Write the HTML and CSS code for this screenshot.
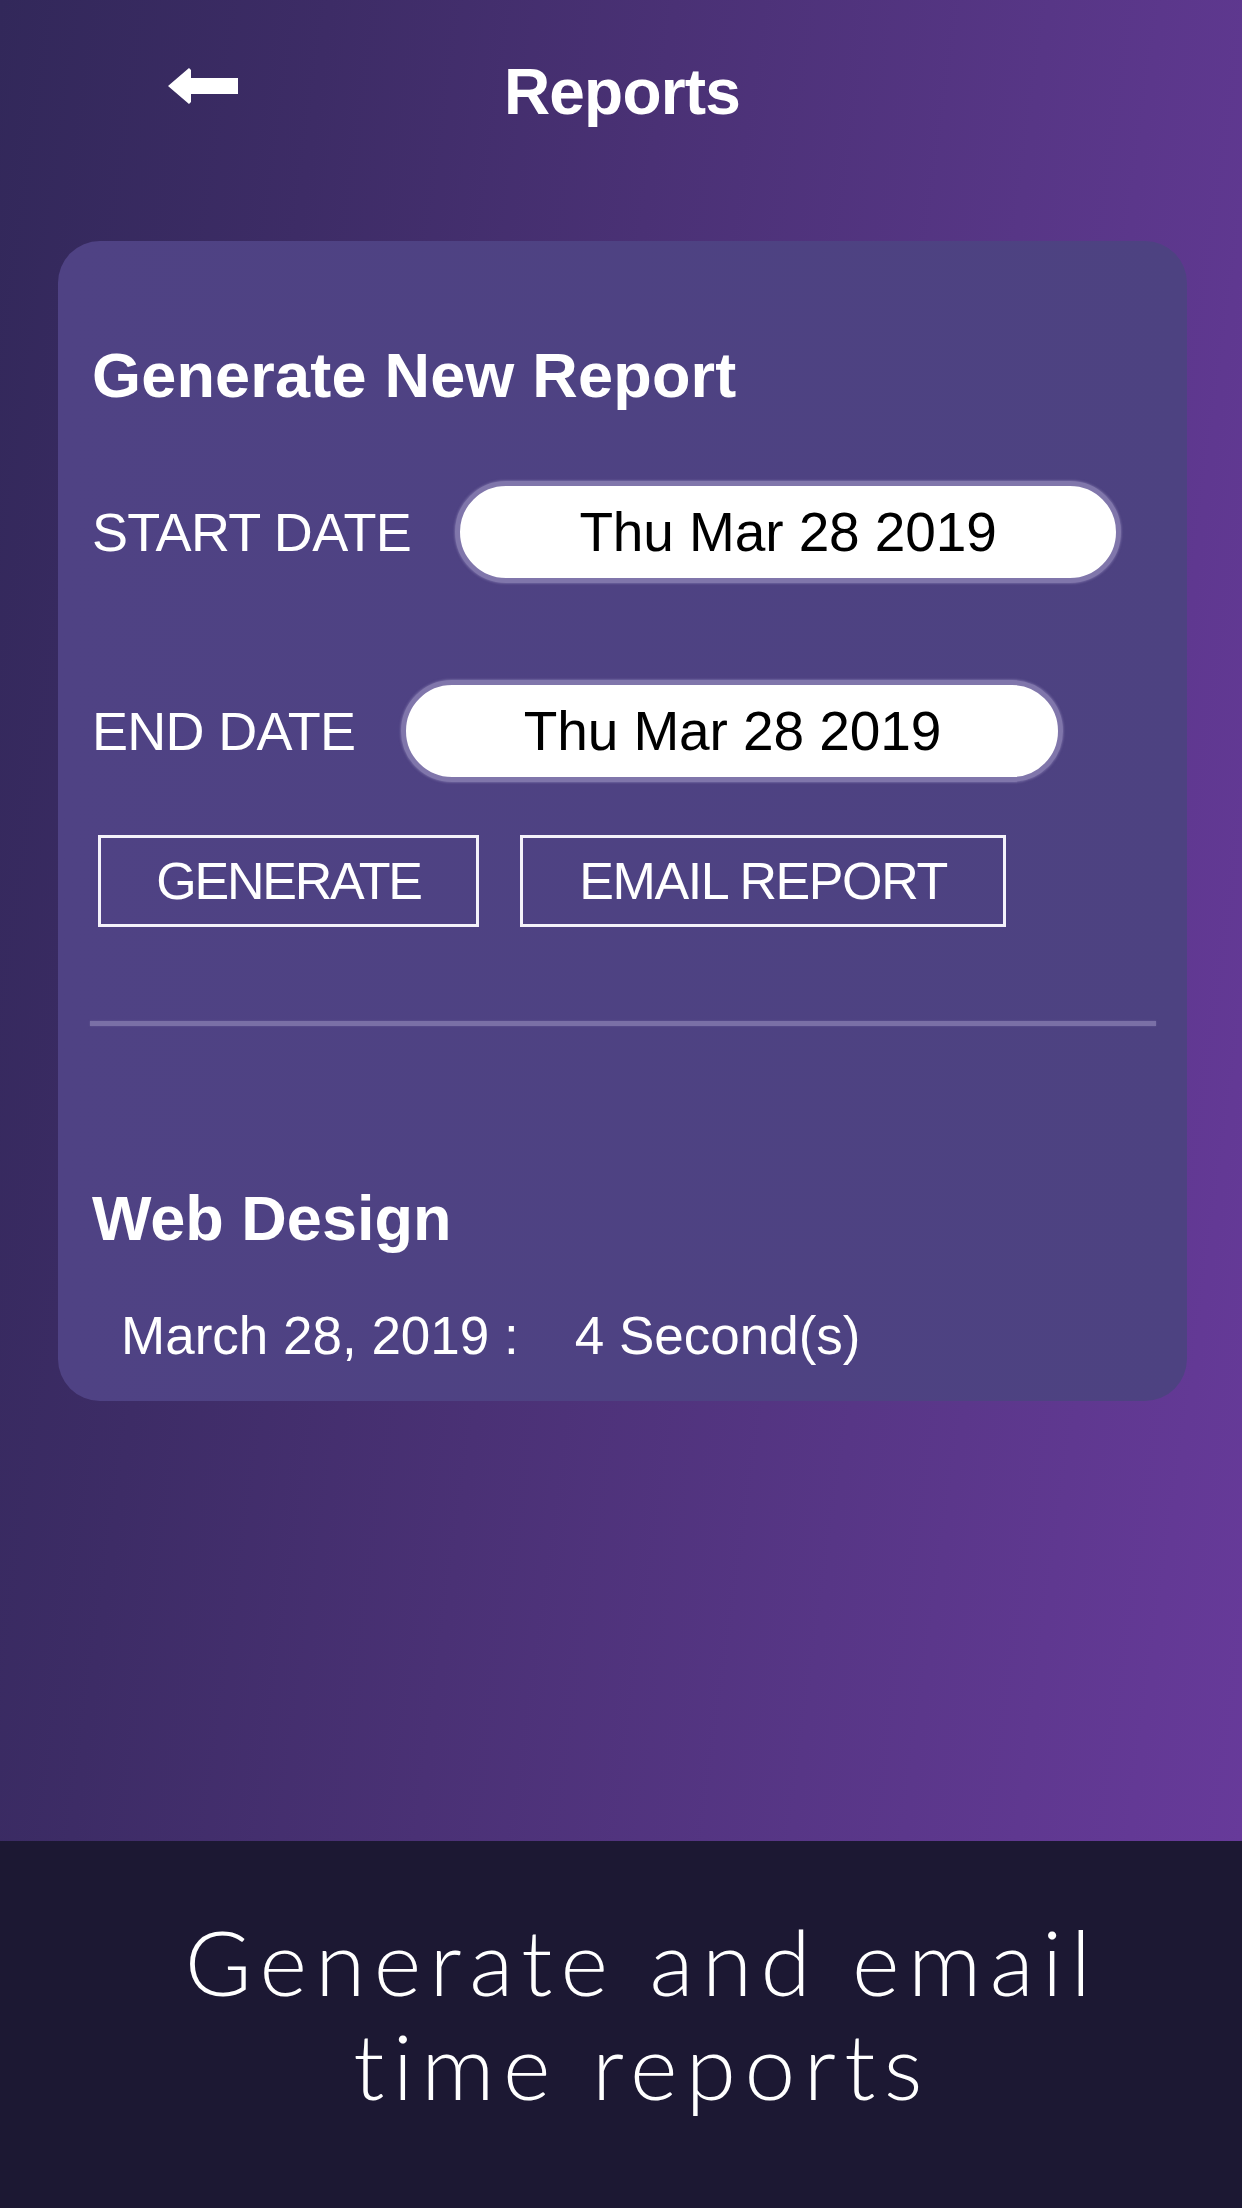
FILE: index.html
```html
<!DOCTYPE html>
<html>
<head>
<meta charset="utf-8">
<link rel="stylesheet" href="styles.css">
</head>
<body>
<div class="screen">
  <header class="topbar">
    <div class="back">
      <svg class="back-icon" width="70" height="36" viewBox="0 0 70 36">
        <polygon points="0,18 21,0 23,2 23,10 70,10 70,26 23,26 23,34 21,36" fill="#ffffff"/>
      </svg>
    </div>
    <h1 class="title">Reports</h1>
    <div></div>
  </header>

  <section class="card">
    <h2 class="card-heading">Generate New Report</h2>

    <div class="date-row date-row-start">
      <span class="date-label">START DATE</span>
      <div class="date-pill pill-start">Thu Mar 28 2019</div>
    </div>

    <div class="date-row date-row-end">
      <span class="date-label">END DATE</span>
      <div class="date-pill pill-end">Thu Mar 28 2019</div>
    </div>

    <div class="actions">
      <button class="btn btn-generate">GENERATE</button>
      <button class="btn btn-email">EMAIL REPORT</button>
    </div>

    <div class="divider"></div>

    <h3 class="project">Web Design</h3>
    <p class="entry"><span class="entry-date">March 28, 2019 :</span><span class="entry-time">4 Second(s)</span></p>
  </section>
</div>

<footer class="caption">
  <p class="caption-text">Generate and email<br>time reports</p>
</footer>
</body>
</html>
```

FILE: styles.css
```css
* {
  box-sizing: border-box;
}

html, body {
  margin: 0;
  padding: 0;
}

body {
  width: 1242px;
  height: 2208px;
  overflow: hidden;
  font-family: "Liberation Sans", Arial, sans-serif;
  background: #1c1833;
}

.screen {
  height: 1841px;
  background: linear-gradient(98deg, #32285a 0%, #3d2c66 22%, #4a3175 45%, #573686 70%, #673a9a 100%);
  padding-top: 60px;
}

.topbar {
  display: grid;
  grid-template-columns: 1fr auto 1fr;
  align-items: start;
  height: 64px;
  margin-bottom: 117px;
}

.back {
  padding-left: 168px;
  padding-top: 8px;
}

.back-icon {
  display: block;
}

.title {
  margin: 0;
  color: #ffffff;
  font-size: 64px;
  line-height: 64px;
  font-weight: 700;
  letter-spacing: -0.8px;
  padding-left: 2px;
}

.card {
  margin-left: 58px;
  width: 1129px;
  border-radius: 42px;
  background: linear-gradient(90deg, #4f4284 0%, #4d4281 100%);
  padding: 103px 0 39px 34px;
}

.card-heading {
  margin: 0;
  color: #ffffff;
  font-size: 63px;
  line-height: 63px;
  font-weight: 700;
  letter-spacing: 0.2px;
}

.date-row {
  display: flex;
  align-items: center;
  gap: 44px;
}

.date-row-start {
  margin-top: 74px;
}

.date-row-end {
  margin-top: 97px;
}

.date-label {
  color: #ffffff;
  font-size: 54px;
  line-height: 54px;
  letter-spacing: -0.7px;
}

.date-pill {
  height: 102px;
  border-radius: 51px;
  background: #ffffff;
  border: 5px solid #8076ab;
  box-shadow: 0 0 2px 1px rgba(128, 118, 171, 0.6);
  color: #000000;
  font-size: 55px;
  line-height: 92px;
  text-align: center;
  letter-spacing: -0.1px;
}

.pill-start {
  width: 666px;
}

.pill-end {
  width: 662px;
  margin-left: 2px;
}

.actions {
  display: flex;
  gap: 41px;
  margin-top: 53px;
  margin-left: 6px;
}

.btn {
  height: 92px;
  border: 3px solid #f4f2fa;
  background: transparent;
  color: #ffffff;
  font-family: "Liberation Sans", Arial, sans-serif;
  font-size: 52px;
  line-height: 52px;
  padding: 0;
  letter-spacing: -2.2px;
  text-align: center;
}

.btn-generate {
  width: 381px;
}

.btn-email {
  width: 486px;
  letter-spacing: -1.4px;
}

.divider {
  margin-top: 94px;
  margin-left: -2px;
  width: 1066px;
  height: 5px;
  background: #7a70a6;
  box-shadow: 0 0 2px rgba(122, 112, 166, 0.7);
}

.project {
  margin: 161px 0 0 0;
  color: #ffffff;
  font-size: 63px;
  line-height: 63px;
  font-weight: 700;
}

.entry {
  margin: 59px 0 0 29px;
  color: #ffffff;
  font-size: 53px;
  line-height: 53px;
  display: flex;
  gap: 56px;
}

.caption {
  height: 367px;
  padding-top: 68px;
  padding-left: 42px;
}

.caption-text {
  margin: 0;
  color: #ffffff;
  font-family: Lato, "Open Sans", sans-serif;
  font-weight: 300;
  font-size: 91px;
  line-height: 104px;
  letter-spacing: 8.4px;
  text-align: center;
}
```
